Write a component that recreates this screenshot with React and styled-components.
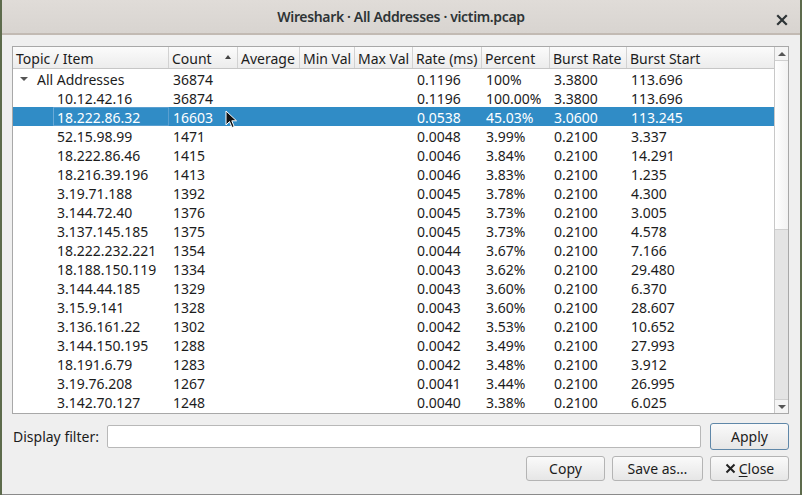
import React from 'react'
import styled, { createGlobalStyle } from 'styled-components'

const Global = createGlobalStyle`
  html, body { margin: 0; padding: 0; }
  body {
    width: 802px;
    height: 495px;
    overflow: hidden;
    background: #5d6b4c;
    font-family: "Noto Sans", "Open Sans", sans-serif;
    font-size: 14px;
    color: #1c1c1c;
  }
`

const Window = styled.div`
  margin-left: 2px;
  width: 798px;
  height: 494px;
  background: #efefef;
  border-bottom: 1px solid #8a8a8a;
  display: flex;
  flex-direction: column;
  position: relative;
`

const TitleBar = styled.div`
  height: 33px;
  flex: none;
  background: linear-gradient(#e0dcd8, #d8d4d0);
  border-bottom: 2px solid #c2bab3;
  display: flex;
  align-items: center;
  justify-content: center;
  position: relative;
  font-size: 14px;
  font-weight: 600;
  color: #2e3436;
  letter-spacing: -0.35px;
`

const CloseX = styled.div`
  position: absolute;
  right: 12px;
  top: 11px;
  width: 12px;
  height: 12px;
`

const Body = styled.div`
  flex: 1;
  display: flex;
  flex-direction: column;
  padding: 11px 11px 0 10px;
`

const Frame = styled.div`
  height: 366px;
  border: 1px solid #a8a8a8;
  background: #fff;
  display: flex;
`

const TableArea = styled.div`
  flex: 1;
  display: flex;
  flex-direction: column;
  overflow: hidden;
`

const cols = '156px 69px 62px 55px 58px 69px 68px 77px 1fr'

const Header = styled.div`
  display: grid;
  grid-template-columns: ${cols};
  height: 21px;
  background: linear-gradient(#fbfbfb, #ececec);
  border-bottom: 1px solid #c6c6c6;
`

const HeadCell = styled.div`
  padding: 2px 0 0 3px;
  box-sizing: border-box;
  border-right: ${p => (p.last ? 'none' : '1px solid #d2d2d2')};
  display: flex;
  align-items: center;
  white-space: nowrap;
  overflow: hidden;
  position: relative;
`

const SortArrow = styled.span`
  position: absolute;
  right: 6px;
  top: 8px;
  width: 0;
  height: 0;
  border-left: 3px solid transparent;
  border-right: 3px solid transparent;
  border-bottom: 4px solid #444;
`

const Row = styled.div`
  display: grid;
  grid-template-columns: ${cols};
  height: 19px;
  background: ${p => (p.selected ? '#308cc6' : 'transparent')};
  color: ${p => (p.selected ? '#fff' : '#1c1c1c')};
`

const Cell = styled.div`
  padding: 2px 0 0 ${p => p.indent || 4}px;
  display: flex;
  align-items: center;
  white-space: nowrap;
  overflow: hidden;
  box-sizing: border-box;
`

const FocusCell = styled(Cell)`
  margin-left: 40px;
  padding: 1px 0 0 3px;
  border: 1px solid #5a9fd0;
  border-left-color: #6aaad8;
`

const Twisty = styled.span`
  width: 0;
  height: 0;
  margin: 0 9px 1px 5px;
  border-left: 4px solid transparent;
  border-right: 4px solid transparent;
  border-top: 4px solid #555;
`

const ScrollBar = styled.div`
  width: 13px;
  border-left: 1px solid #c8c8c8;
  display: flex;
  flex-direction: column;
  background: #e4e4e4;
`

const ArrowBox = styled.div`
  height: 13px;
  flex: none;
  background: #f4f4f4;
  display: flex;
  align-items: center;
  justify-content: center;
  border-${p => (p.down ? 'top' : 'bottom')}: 1px solid #cfcfcf;
`

const Arrow = styled.span`
  width: 0;
  height: 0;
  border-left: 4px solid transparent;
  border-right: 4px solid transparent;
  border-${p => (p.down ? 'top' : 'bottom')}: 4px solid #555;
`

const Thumb = styled.div`
  height: 168px;
  flex: none;
  background: linear-gradient(90deg, #ffffff, #f2f2f2);
  border-bottom: 1px solid #cfcfcf;
`

const Trough = styled.div`
  flex: 1;
`

const FilterRow = styled.div`
  display: flex;
  align-items: center;
  margin-top: 9px;
  height: 27px;
`

const Label = styled.div`
  width: 94px;
  padding-left: 1px;
`

const Input = styled.div`
  width: 593px;
  height: 21px;
  background: #fff;
  border: 1px solid #b8b8b8;
  border-radius: 2px;
  margin-right: 9px;
`

const Button = styled.div`
  width: ${p => p.w || 77}px;
  height: ${p => p.h || 25}px;
  box-sizing: border-box;
  border: 1px solid ${p => (p.primary ? '#5f87a8' : '#b4b4b4')};
  border-radius: 3px;
  background: linear-gradient(#fafafa, #e6e6e6);
  display: flex;
  align-items: center;
  justify-content: center;
  gap: 3px;
  flex: none;
  color: #1c1c1c;
`

const ButtonRow = styled.div`
  display: flex;
  justify-content: flex-end;
  gap: 7px;
  margin-top: 6px;
`

const Mnemonic = styled.span`
  text-decoration: underline;
  text-underline-offset: 2px;
`

const Cursor = styled.svg`
  position: absolute;
  left: 223px;
  top: 110px;
`

const headers = ['Topic / Item', 'Count', 'Average', 'Min Val', 'Max Val', 'Rate (ms)', 'Percent', 'Burst Rate', 'Burst Start']

const rows = [
  ['10.12.42.16', '36874', '0.1196', '100.00%', '3.3800', '113.696'],
  ['18.222.86.32', '16603', '0.0538', '45.03%', '3.0600', '113.245'],
  ['52.15.98.99', '1471', '0.0048', '3.99%', '0.2100', '3.337'],
  ['18.222.86.46', '1415', '0.0046', '3.84%', '0.2100', '14.291'],
  ['18.216.39.196', '1413', '0.0046', '3.83%', '0.2100', '1.235'],
  ['3.19.71.188', '1392', '0.0045', '3.78%', '0.2100', '4.300'],
  ['3.144.72.40', '1376', '0.0045', '3.73%', '0.2100', '3.005'],
  ['3.137.145.185', '1375', '0.0045', '3.73%', '0.2100', '4.578'],
  ['18.222.232.221', '1354', '0.0044', '3.67%', '0.2100', '7.166'],
  ['18.188.150.119', '1334', '0.0043', '3.62%', '0.2100', '29.480'],
  ['3.144.44.185', '1329', '0.0043', '3.60%', '0.2100', '6.370'],
  ['3.15.9.141', '1328', '0.0043', '3.60%', '0.2100', '28.607'],
  ['3.136.161.22', '1302', '0.0042', '3.53%', '0.2100', '10.652'],
  ['3.144.150.195', '1288', '0.0042', '3.49%', '0.2100', '27.993'],
  ['18.191.6.79', '1283', '0.0042', '3.48%', '0.2100', '3.912'],
  ['3.19.76.208', '1267', '0.0041', '3.44%', '0.2100', '26.995'],
  ['3.142.70.127', '1248', '0.0040', '3.38%', '0.2100', '6.025'],
]

export default function App() {
  return (
    <>
      <Global />
      <Window>
        <TitleBar>
          Wireshark · All Addresses · victim.pcap
          <CloseX>
            <svg width="12" height="12" viewBox="0 0 12 12">
              <path d="M2 2 L10 10 M10 2 L2 10" stroke="#2e3436" strokeWidth="2.2" strokeLinecap="square" />
            </svg>
          </CloseX>
        </TitleBar>
        <Body>
          <Frame>
            <TableArea>
              <Header>
                {headers.map((h, i) => (
                  <HeadCell key={h} last={i === headers.length - 1}>
                    {h}
                    {h === 'Count' && <SortArrow />}
                  </HeadCell>
                ))}
              </Header>
              <Row>
                <Cell indent={2}>
                  <Twisty />
                  All Addresses
                </Cell>
                <Cell>36874</Cell>
                <Cell />
                <Cell />
                <Cell />
                <Cell>0.1196</Cell>
                <Cell>100%</Cell>
                <Cell>3.3800</Cell>
                <Cell>113.696</Cell>
              </Row>
              {rows.map((r, i) => (
                <Row key={r[0]} selected={i === 1}>
                  {i === 1 ? <FocusCell>{r[0]}</FocusCell> : <Cell indent={44}>{r[0]}</Cell>}
                  <Cell>{r[1]}</Cell>
                  <Cell />
                  <Cell />
                  <Cell />
                  <Cell>{r[2]}</Cell>
                  <Cell>{r[3]}</Cell>
                  <Cell>{r[4]}</Cell>
                  <Cell>{r[5]}</Cell>
                </Row>
              ))}
            </TableArea>
            <ScrollBar>
              <ArrowBox>
                <Arrow />
              </ArrowBox>
              <Thumb />
              <Trough />
              <ArrowBox down>
                <Arrow down />
              </ArrowBox>
            </ScrollBar>
          </Frame>
          <FilterRow>
            <Label>Display filter:</Label>
            <Input />
            <Button primary w={79} h={27}>Apply</Button>
          </FilterRow>
          <ButtonRow>
            <Button w={79}>Copy</Button>
            <Button w={91}>Save as…</Button>
            <Button w={79}>
              <svg width="11" height="11" viewBox="0 0 11 11">
                <path d="M1.5 1.5 L9.5 9.5 M9.5 1.5 L1.5 9.5" stroke="#222" strokeWidth="2" />
              </svg>
              <span>
                <Mnemonic>C</Mnemonic>lose
              </span>
            </Button>
          </ButtonRow>
        </Body>
        <Cursor width="13" height="20" viewBox="0 0 13 20">
          <path d="M1 1 L1 15 L4.5 11.5 L7 17.5 L9.2 16.6 L6.8 10.8 L11.5 10.8 Z" fill="#111" stroke="#fff" strokeWidth="1" />
        </Cursor>
      </Window>
    </>
  )
}
